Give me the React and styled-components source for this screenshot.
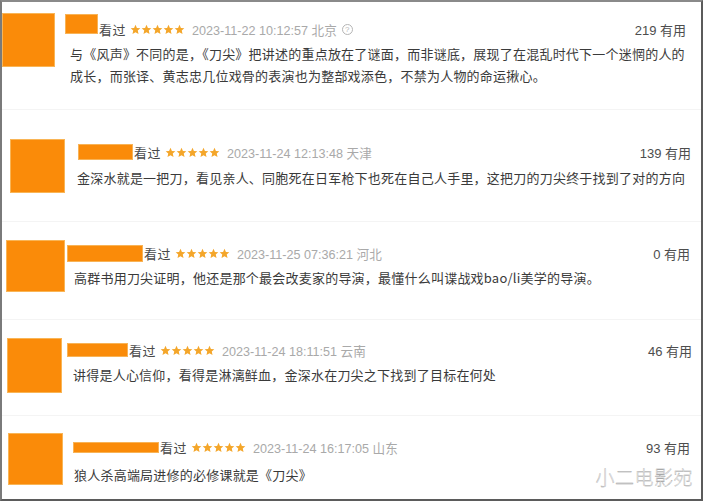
import React from 'react'
import styled, { createGlobalStyle } from 'styled-components'

const GlobalStyle = createGlobalStyle`
  html, body { margin: 0; padding: 0; background: #ffffff; }
  body { font-family: "Noto Sans CJK SC", "Liberation Sans", sans-serif; }
`

const comments = [
  {
    h: 108, pt: 11, pl: 0, aw: 53, ah: 54, bodyGap: 10,
    barW: 33, barH: 20, barShift: 10, hTop: 6, tGap: 4, tIndent: 5,
    date: '2023-11-22 10:12:57', loc: '北京', info: true, useful: 219, right: 15,
    lines: [
      '与《风声》不同的是，《刀尖》把讲述的重点放在了谜面，而非谜底，展现了在混乱时代下一个迷惘的人的',
      '成长，而张译、黄志忠几位戏骨的表演也为整部戏添色，不禁为人物的命运揪心。',
    ],
  },
  {
    h: 112, pt: 29, pl: 8, aw: 55, ah: 54, bodyGap: 13,
    barW: 55, barH: 16, barShift: 0, hTop: 3, tGap: 5, tIndent: -1,
    date: '2023-11-24 12:13:48', loc: '天津', useful: 139, right: 10,
    lines: ['金深水就是一把刀，看见亲人、同胞死在日军枪下也死在自己人手里，这把刀的刀尖终于找到了对的方向'],
  },
  {
    h: 98, pt: 18, pl: 4, aw: 59, ah: 52, bodyGap: 2,
    barW: 76, barH: 17, barShift: 0, hTop: 3, tGap: 4, tIndent: 7,
    date: '2023-11-25 07:36:21', loc: '河北', useful: 0, right: 11,
    lines: ['高群书用刀尖证明，他还是那个最会改麦家的导演，最懂什么叫谍战戏bao/li美学的导演。'],
  },
  {
    h: 96, pt: 18, pl: 5, aw: 55, ah: 55, bodyGap: 5,
    barW: 61, barH: 14, barShift: 0, hTop: 2, tGap: 4, tIndent: 6,
    date: '2023-11-24 18:11:51', loc: '云南', useful: 46, right: 9,
    lines: ['讲得是人心信仰，看得是淋漓鲜血，金深水在刀尖之下找到了目标在何处'],
  },
  {
    h: 82, pt: 17, pl: 6, aw: 55, ah: 52, bodyGap: 10,
    barW: 86, barH: 11, barShift: 0, hTop: 4, tGap: 7, tIndent: 1,
    date: '2023-11-24 16:17:05', loc: '山东', useful: 93, right: 11,
    lines: ['狼人杀高端局进修的必修课就是《刀尖》'],
  },
]

function Stars() {
  return (
    <StarRow>
      {[0, 1, 2, 3, 4].map((i) => (
        <svg key={i} width="11" height="11" viewBox="0 0 24 24">
          <path d="M12 1.8l3.1 6.9 7.4.7-5.6 5 1.7 7.4L12 17.9l-6.6 3.9 1.7-7.4-5.6-5 7.4-.7z" fill="#f4a62a" />
        </svg>
      ))}
    </StarRow>
  )
}

function App() {
  return (
    <>
      <GlobalStyle />
      <Frame>
        {comments.map((c, i) => (
          <Comment key={i} $h={c.h} $pt={c.pt} $pl={c.pl} $last={i === comments.length - 1}>
            <Avatar $w={c.aw} $h={c.ah} />
            <Body $gap={c.bodyGap} $right={c.right}>
              <Header $top={c.hTop}>
                <NameBar $w={c.barW} $h={c.barH} $shift={c.barShift} />
                <Seen>看过</Seen>
                <Stars />
                <Meta>
                  {c.date} {c.loc}
                  {c.info && <Info>?</Info>}
                </Meta>
                <Useful>{c.useful} 有用</Useful>
              </Header>
              <Text $gap={c.tGap} $indent={c.tIndent}>
                {c.lines.map((l, j) => (
                  <div key={j}>{l}</div>
                ))}
              </Text>
            </Body>
          </Comment>
        ))}
        <Watermark>小二电影宛</Watermark>
      </Frame>
    </>
  )
}

const Frame = styled.div`
  position: relative;
  box-sizing: border-box;
  width: 703px;
  height: 501px;
  border: 2px solid #5b5b5b;
  border-top-color: #8a8a8a;
  border-left-color: #7a7a7a;
  background: #ffffff;
  display: flex;
  flex-direction: column;
  overflow: hidden;
`

const Comment = styled.div`
  box-sizing: border-box;
  height: ${(p) => p.$h}px;
  flex: none;
  display: flex;
  align-items: flex-start;
  padding-top: ${(p) => p.$pt}px;
  padding-left: ${(p) => p.$pl}px;
  border-bottom: ${(p) => (p.$last ? 'none' : '1px solid #f4f4f4')};
`

const Avatar = styled.div`
  flex: none;
  box-sizing: border-box;
  width: ${(p) => p.$w}px;
  height: ${(p) => p.$h}px;
  background: #fa8b09;
  border: 1px solid #f9b556;
`

const Body = styled.div`
  flex: 1;
  display: flex;
  flex-direction: column;
  margin-left: ${(p) => p.$gap}px;
  margin-right: ${(p) => p.$right}px;
`

const Header = styled.div`
  display: flex;
  align-items: center;
  height: 20px;
  margin-top: ${(p) => p.$top}px;
  font-size: 13px;
  white-space: nowrap;
`

const NameBar = styled.div`
  flex: none;
  width: ${(p) => p.$w}px;
  height: ${(p) => p.$h}px;
  margin-bottom: ${(p) => p.$shift}px;
  background: #fa8b09;
  border: 1px solid #f8b356;
  box-sizing: border-box;
`

const Seen = styled.span`
  color: #4a4a4a;
  margin-left: 1px;
  margin-right: 4px;
  letter-spacing: 0.5px;
`

const StarRow = styled.span`
  display: flex;
  flex: none;
`

const Meta = styled.span`
  margin-left: 7px;
  color: #a9a9a9;
  font-family: "Liberation Sans", "Noto Sans CJK SC", sans-serif;
  font-size: 12.6px;
  display: flex;
  align-items: center;
`

const Info = styled.span`
  display: inline-flex;
  align-items: center;
  justify-content: center;
  box-sizing: border-box;
  width: 11px;
  height: 11px;
  margin-left: 5px;
  border: 1px solid #b5b5b5;
  border-radius: 50%;
  font-size: 8px;
  color: #b5b5b5;
`

const Useful = styled.span`
  margin-left: auto;
  color: #4d4d4d;
  font-family: "Liberation Sans", "Noto Sans CJK SC", sans-serif;
  font-size: 13px;
`

const Text = styled.div`
  margin-top: ${(p) => p.$gap}px;
  margin-left: ${(p) => p.$indent}px;
  color: #3a3a3a;
  font-size: 13px;
  line-height: 22px;
  letter-spacing: 0.22px;
  white-space: nowrap;
`

const Watermark = styled.div`
  position: absolute;
  right: 8px;
  bottom: 9px;
  font-size: 19px;
  font-weight: 300;
  letter-spacing: 0.5px;
  -webkit-text-stroke: 0.3px #9a9a9a;
  color: #f4f4f4;
`

export default App
